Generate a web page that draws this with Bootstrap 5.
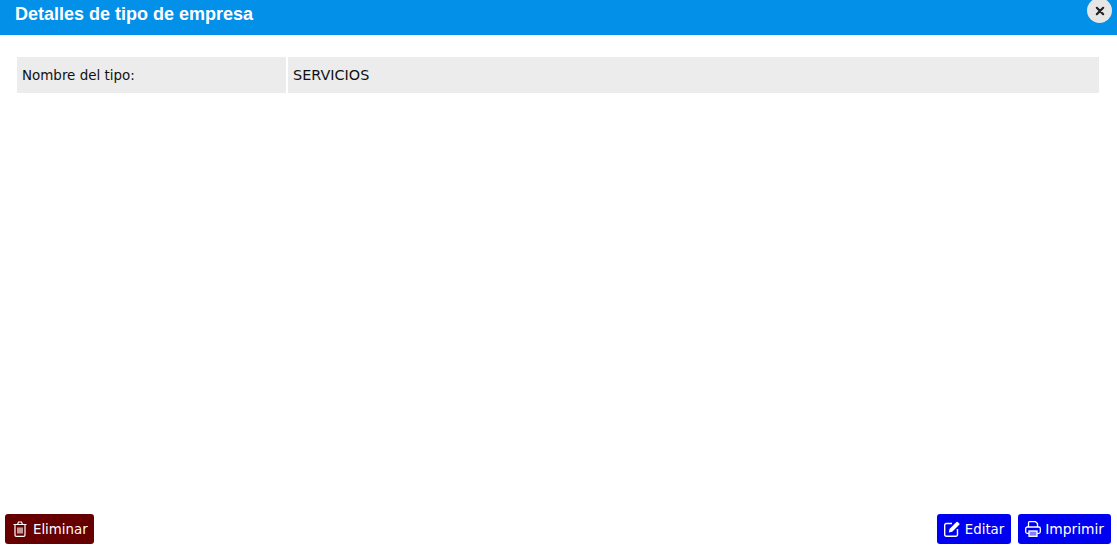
<!DOCTYPE html>
<html lang="es">
<head>
<meta charset="utf-8">
<title>Detalles de tipo de empresa</title>
<link href="https://cdn.jsdelivr.net/npm/bootstrap@5.3.0/dist/css/bootstrap.min.css" rel="stylesheet">
<style>
html, body { height: 550px; overflow: hidden; background: #fff; }
.dlg { height: 550px; font-family: "DejaVu Sans", sans-serif; font-size: 14px; color: #111; }
.dlg-head { height: 35px; background: #0390e8; padding-left: 15px; }
.dlg-title { font-family: "Liberation Sans", sans-serif; font-weight: 700; font-size: 18px; line-height: 29px; color: #fff; margin: 0; }
.dlg-close { position: absolute; top: -2px; right: 5px; width: 25px; height: 25px; border: 0; padding: 0; border-radius: 50%; background: #e6e6e6; display: flex; align-items: center; justify-content: center; }
.dlg-body { padding: 22px 18px 0 17px; }
.dlg-row { display: flex; gap: 2px; height: 36px; }
.dlg-cell { background: #ececec; padding-left: 5px; line-height: 37px; font-size: 13.45px; }
.dlg-value { font-size: 14.4px; }
.dlg-label { width: 269px; flex: none; }
.dlg-foot { padding: 0 6px 6px 5px; }
.act { height: 30px; padding: 0 6px 0 8px; border: 0; border-radius: 3px; color: #fff; font-size: 13.33px; line-height: 20px; display: inline-flex; align-items: center; gap: 6px; }
.act:hover, .act:active { color: #fff; }
.act-low { padding-top: 2px; }
.act-del { background: #660000; }
.act-del:hover { background: #660000; }
.act-blue { background: #0000f0; padding-left: 7px; padding-right: 7px; gap: 5px; }
.act-blue:hover { background: #0000f0; }
.act-print { font-size: 13.8px; gap: 4px; }
.btn-row { gap: 7px; }
</style>
</head>
<body>
<div class="dlg d-flex flex-column position-relative">
  <div class="dlg-head d-flex align-items-start">
    <h1 class="dlg-title">Detalles de tipo de empresa</h1>
    <button class="dlg-close" type="button" aria-label="Cerrar">
      <svg width="10" height="10" viewBox="0 0 11 11"><path d="M2 2 9 9M9 2 2 9" stroke="#222" stroke-width="2.4" stroke-linecap="round"/></svg>
    </button>
  </div>
  <div class="dlg-body flex-grow-1">
    <div class="dlg-row">
      <div class="dlg-cell dlg-label">Nombre del tipo:</div>
      <div class="dlg-cell dlg-value flex-grow-1">SERVICIOS</div>
    </div>
  </div>
  <div class="dlg-foot d-flex justify-content-between align-items-end">
    <button class="btn act act-del" type="button">
      <svg width="14" height="16" viewBox="0 0 14 16" fill="none" stroke="#fff" stroke-width="1.2"><path d="M.5 3.500h13M4.500 3.500l1-2.500h3l1 2.500M2 3.500v10.500a1.300 1.300 0 0 0 1.300 1.300h7.400a1.300 1.300 0 0 0 1.300-1.300V3.500M5 6.500v6M7 6.500v6M9 6.500v6"/></svg>
      <span class="act-low">Eliminar</span>
    </button>
    <div class="d-flex btn-row">
      <button class="btn act act-blue" type="button">
        <svg width="16" height="16" viewBox="0 0 16 16" fill="none"><path d="M8 2.500H2.200A1.500 1.500 0 0 0 .7 4v9.800a1.500 1.500 0 0 0 1.500 1.500H12a1.500 1.500 0 0 0 1.500-1.500V8" stroke="#fff" stroke-width="1.400"/><path d="M5.500 8 12.500.9a.9.9 0 0 1 1.200 0l1.600 1.600a.9.9 0 0 1 0 1.200L8.200 10.800 4.800 11.400Z" fill="#fff"/></svg>
        <span class="act-low">Editar</span>
      </button>
      <button class="btn act act-blue act-print" type="button">
        <svg width="16" height="16" viewBox="0 0 16 16" fill="none" stroke="#fff" stroke-width="1.300"><path d="M3.500 6V1.700a1 1 0 0 1 1-1h6L12.500 2.500V6"/><rect x=".7" y="6" width="14.600" height="6.300" rx="1.500"/><rect x="4" y="10" width="8" height="5.300" fill="#8080f8"/></svg>
        <span>Imprimir</span>
      </button>
    </div>
  </div>
</div>
<script src="https://cdn.jsdelivr.net/npm/bootstrap@5.3.0/dist/js/bootstrap.bundle.min.js"></script>
</body>
</html>
